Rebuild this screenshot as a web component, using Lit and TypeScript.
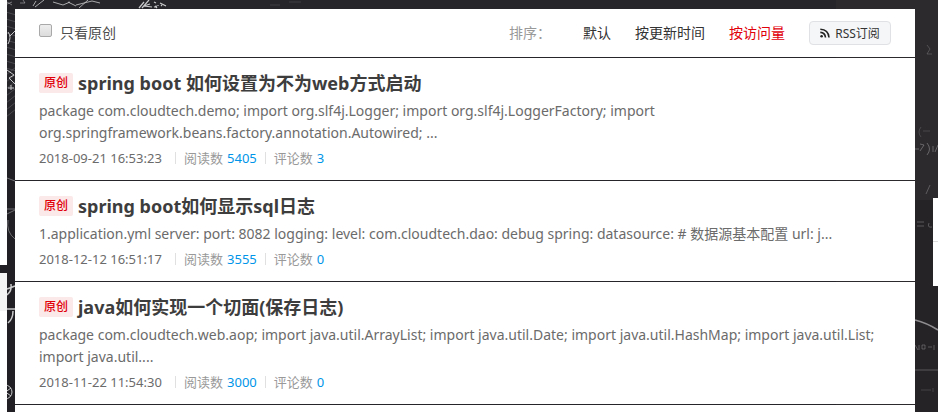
import { LitElement, html, css, svg } from "lit";
import { customElement, property } from "lit/decorators.js";
import { classMap } from "lit/directives/class-map.js";

interface Article {
  title: string;
  summary: string;
  date: string;
  reads: number;
  comments: number;
}

const ARTICLES: Article[] = [
  {
    title: "spring boot 如何设置为不为web方式启动",
    summary:
      "package com.cloudtech.demo; import org.slf4j.Logger; import org.slf4j.LoggerFactory; import org.springframework.beans.factory.annotation.Autowired; ...",
    date: "2018-09-21 16:53:23",
    reads: 5405,
    comments: 3,
  },
  {
    title: "spring boot如何显示sql日志",
    summary:
      "1.application.yml server: port: 8082 logging: level: com.cloudtech.dao: debug spring: datasource: # 数据源基本配置 url: j...",
    date: "2018-12-12 16:51:17",
    reads: 3555,
    comments: 0,
  },
  {
    title: "java如何实现一个切面(保存日志)",
    summary:
      "package com.cloudtech.web.aop; import java.util.ArrayList; import java.util.Date; import java.util.HashMap; import java.util.List; import java.util....",
    date: "2018-11-22 11:54:30",
    reads: 3000,
    comments: 0,
  },
];

const SORTS = ["默认", "按更新时间", "按访问量"];

/* Chalkboard page background */
@customElement("chalk-board")
export class ChalkBoard extends LitElement {
  static styles = css`
    :host {
      display: block;
      background: #26252a;
      overflow: hidden;
    }
    svg {
      display: block;
    }
  `;

  render() {
    const hatch = Array.from({ length: 16 }, (_, i) => svg`
      <path d="M6 ${12 + i * 7}l10 ${i < 9 ? 3 : -8}" stroke="#8a8a8e" stroke-width=".6" opacity=".6" />`);
    return html`
      <svg width="938" height="412" fill="none" aria-hidden="true">
        <rect x="836" width="102" height="412" fill="#2d2a2d" />
        <rect x="915" y="200" width="23" height="212" fill="#252326" />
        <rect y="130" width="15" height="282" fill="#211f23" />
        ${hatch}
        <g stroke="#c9c9cb" stroke-width="1">
          <path d="M0 7l12-5M7 2l5 3M20 3h5l-2-3" opacity=".5" />
          <path d="M36 1l-3 5M44 0l-9 7M53 2l10 3 7-3M68 2l8 4M76 5l16-4 8 2M88 0l-9 8" opacity=".8" />
          <path d="M142 8l7-8M139 8l5-6M144 6l6-2M152 7l-8-1M154 7l3-1M158 6v-1M161 5l1 1M157 8l-2-2M160 3l6 3M154 2l2 1" stroke-width="1.2" />
          <path d="M270 5h10M289 2h12" opacity=".15" />
          <path d="M8 32q4 5 0 12M10 36l5-5M7 70l7 5-5 3 6 6M8 88h6M11 85v5" />
          <path d="M7 178l8 3M7 209h8M7 214l8-4M8 220q-2 12 7 19" opacity=".45" />
          <path d="M7 289l8-3M11 284q1 7-4 11M7 309h8M13 311q0 8-5 12" stroke-width="1.5" />
          <circle cx="5" cy="392" r="7" />
          <path d="M5 385v14M0 388l11 8M0 396l11-8" />
        </g>
        <g stroke="#8f8d90" stroke-width="1">
          <path d="M927 45l3 4-3 5h5" opacity=".4" />
          <path d="M921 127q-4 5 0 10M923 131h7" opacity=".3" />
          <path d="M915 149h4M920 144l4 1-4 6M927 143q5 6 0 12M933 146v6M938 145l-3 7" opacity=".6" />
          <path d="M930 185l-4 9M917 222h7M917 226h7M929 223q-2 5 3 4" opacity=".5" />
          <path d="M915 320q12 3 23 10" stroke-width="1.5" />
          <path d="M915 345l3 5M919 345v5M922 345h3v4h-3zM928 347h4M934 345v5M915 370h23" opacity=".5" />
          <path d="M921 390h10M933 388v4" opacity=".3" />
        </g>
      </svg>
    `;
  }
}

@customElement("article-item")
export class ArticleItem extends LitElement {
  @property({ attribute: false }) article!: Article;

  static styles = css`
    :host {
      display: block;
      background: #fff;
      padding: 12px 24px 11px;
    }
    a {
      color: inherit;
      text-decoration: none;
    }
    .heading {
      display: flex;
      align-items: center;
      gap: 5px;
      margin: 0;
      font-size: 18px;
      line-height: 26px;
      font-weight: 700;
      color: #3d3d3d;
    }
    .tag {
      flex: none;
      width: 34px;
      border-radius: 2px;
      background: #fae9e8;
      color: #e1000a;
      font-size: 12px;
      line-height: 20px;
      font-weight: 500;
      text-align: center;
    }
    .summary {
      margin: 4px 0 0;
      font-size: 14px;
      line-height: 22px;
      color: #6b6b6b;
    }
    .meta {
      display: flex;
      align-items: center;
      margin-top: 3px;
      font-size: 13px;
      line-height: 22px;
      color: #999;
    }
    .date {
      min-width: 128px;
      color: #6b6b6b;
    }
    .part {
      display: flex;
      align-items: center;
      gap: 4px;
    }
    .part::before {
      content: "";
      width: 1px;
      height: 12px;
      margin: 0 4px 0 8px;
      background: #e0e0e0;
    }
    .num {
      color: #0095e8;
    }
  `;

  render() {
    const a = this.article;
    return html`
      <h4 class="heading"><span class="tag">原创</span><a href="#">${a.title}</a></h4>
      <p class="summary"><a href="#">${a.summary}</a></p>
      <div class="meta">
        <span class="date">${a.date}</span>
        <span class="part">阅读数 <span class="num">${a.reads}</span></span>
        <span class="part">评论数 <span class="num">${a.comments}</span></span>
      </div>
    `;
  }
}

@customElement("app-root")
export class AppRoot extends LitElement {
  static styles = css`
    :host {
      display: block;
      position: relative;
      height: 100vh;
      overflow: hidden;
      font-family: "Noto Sans", "Noto Sans CJK SC", sans-serif;
    }
    chalk-board {
      position: absolute;
      inset: 0;
    }
    .page {
      position: relative;
      display: flex;
      gap: 8px;
      height: 100%;
    }
    .side {
      flex: none;
      width: 7px;
      display: flex;
      flex-direction: column;
      gap: 8px;
    }
    .card {
      height: 265px;
      background: #fff;
    }
    .card.next {
      flex: 1;
      border-top: 38px solid #f4f4f4;
    }
    main {
      flex: 1;
      min-width: 0;
      margin-right: 23px;
      padding-top: 9px;
      display: flex;
      flex-direction: column;
      gap: 1px;
    }
    .bar {
      flex: none;
      box-sizing: border-box;
      height: 48px;
      padding: 0 24px 2px;
      display: flex;
      align-items: center;
      justify-content: space-between;
      background: #fff;
      font-size: 14px;
    }
    .only {
      display: flex;
      align-items: center;
      gap: 8px;
      color: #4d4d4d;
    }
    .only input {
      appearance: none;
      box-sizing: border-box;
      width: 13px;
      height: 13px;
      margin: 0 0 3px;
      border: 1px solid #a9a9a9;
      border-radius: 2px;
      background: linear-gradient(#eee, #dcdcdc);
    }
    .sorts {
      display: flex;
      align-items: center;
      gap: 24px;
    }
    .label {
      width: 50px;
      color: #999;
      white-space: nowrap;
    }
    .sort {
      color: #333;
      text-decoration: none;
    }
    .sort.on {
      color: #e1000a;
    }
    .rss {
      box-sizing: border-box;
      width: 82px;
      height: 24px;
      padding: 0;
      margin-top: 2px;
      display: flex;
      align-items: center;
      justify-content: center;
      gap: 5px;
      border: 1px solid #dfe1e4;
      border-radius: 4px;
      background: #f5f6f7;
      color: #333;
      font: 12px "Noto Sans", "Noto Sans CJK SC", sans-serif;
    }
    article-item {
      flex: none;
    }
    .rest {
      flex: 1;
      background: #fff;
    }
    .float {
      position: absolute;
      right: 0;
      top: 198px;
      width: 5px;
      background: #fff;
    }
    .cell {
      height: 43px;
    }
    .cell + .cell {
      height: 44px;
      border-top: 1px solid #ddd;
    }
  `;

  render() {
    return html`
      <chalk-board></chalk-board>
      <div class="page">
        <aside class="side">
          <div class="card"></div>
          <div class="card next"></div>
        </aside>
        <main>
          <div class="bar">
            <label class="only"><input type="checkbox" />只看原创</label>
            <nav class="sorts">
              <span class="label">排序：</span>
              ${SORTS.map(
                (s, i) => html`<a href="#" class=${classMap({ sort: true, on: i === 2 })}>${s}</a>`
              )}
              <button class="rss" type="button">
                <svg width="10" height="10" viewBox="0 0 10 10" fill="none" stroke="#222" stroke-width="1.6" aria-hidden="true">
                  <circle cx="1.6" cy="8.2" r="1.3" fill="#222" stroke="none" />
                  <path d="M.3 4.4Q5 4.6 5.5 9.5M.3 1.2Q8.4 1.5 9 9.5" />
                </svg>
                RSS订阅
              </button>
            </nav>
          </div>
          ${ARTICLES.map((a) => html`<article-item .article=${a}></article-item>`)}
          <div class="rest"></div>
        </main>
      </div>
      <div class="float"><div class="cell"></div><div class="cell"></div></div>
    `;
  }
}
